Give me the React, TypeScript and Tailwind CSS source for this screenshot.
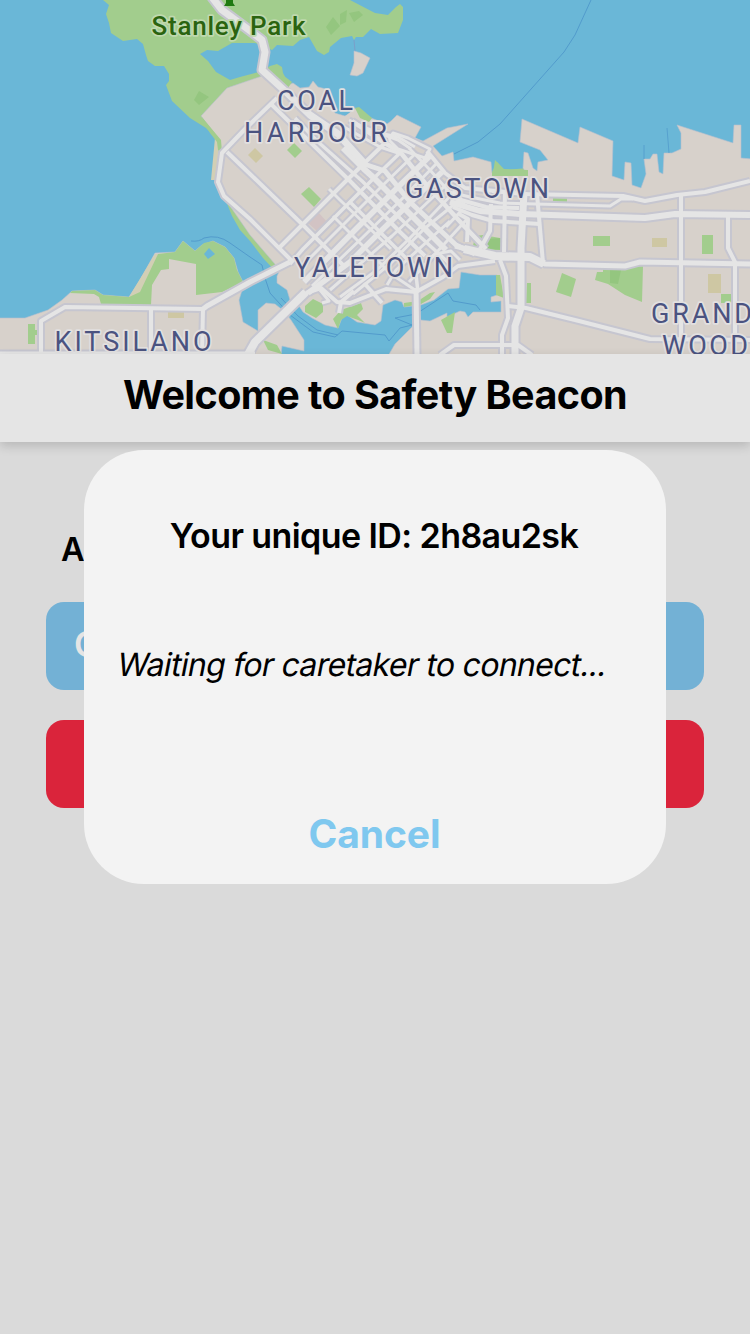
import React from "react";

type Road = { d: string; w: number };

const roads: Road[] = [
  // west end and peninsula edge
  { d: "M277 98L245 129L222 153L218 182L224 196L250 219L293 262", w: 4 },
  { d: "M227 152L250 174L302 224L345 267", w: 4 },
  { d: "M272 105L310 142L350 181L400 232L425 256", w: 4 },
  { d: "M280 247L347 180L384 144", w: 4 },
  { d: "M290 264L303 249L373 179L402 151", w: 3.5 },
  { d: "M302 266L341 227L381 187L414 155", w: 3 },
  { d: "M304 282L355 230L397 188L430 156", w: 5.5 },
  { d: "M312 286L362 238L405 196L437 163", w: 3 },
  { d: "M308 293L350 262L384 228L442 172", w: 5.5 },
  { d: "M330 290L392 236L449 182", w: 3 },
  { d: "M340 297L377 270L410 238L456 190", w: 3 },
  { d: "M353 294L390 264L424 229L462 198", w: 3 },
  { d: "M387 285L396 270L431 238L450 221", w: 3 },
  { d: "M409 282L436 253L468 218", w: 3 },
  // streets running south-east
  { d: "M295 118L317 141L362 181L404 222L450 264", w: 3.5 },
  { d: "M343 148L364 169L374 178L406 210L446 250", w: 6 },
  { d: "M338 134L364 164L385 171L411 203L456 245L475 254", w: 5 },
  { d: "M352 121L374 136L401 153L425 183L464 226L486 249", w: 4.5 },
  { d: "M344 127L380 147L398 153", w: 3 },
  { d: "M349 120L363 127L398 140L411 149", w: 3 },
  { d: "M375 132L398 137L415 147", w: 3 },
  { d: "M389 140L393 133L408 138L430 149L425 158L398 149L389 140", w: 3 },
  { d: "M409 148L430 170L451 194L466 206", w: 3 },
  { d: "M427 151L445 173L465 188L506 192", w: 4 },
  { d: "M333 216L363 246L391 274L415 290", w: 3 },
  { d: "M349 201L381 233L415 267L418 292", w: 3.5 },
  { d: "M329 189L340 200L391 249", w: 3 },
  { d: "M320 290L329 301L322 303", w: 3 },
  { d: "M364 283L382 303", w: 4 },
  { d: "M354 291L341 302L339 313", w: 4 },
  // waterfront drive
  { d: "M306 293L321 288L337 302L350 303L386 289L416 292L443 277L458 266L495 261", w: 4 },
  { d: "M426 262L435 254L451 251L460 260", w: 3 },
  // gastown
  { d: "M450 197L486 207L519 208", w: 4 },
  { d: "M453 207L472 215L493 221L540 224", w: 4 },
  { d: "M459 214L468 219L467 242", w: 4 },
  { d: "M491 204L490 231L480 249", w: 4 },
  { d: "M445 191L470 197L500 203L610 206L621 199L633 199", w: 3 },
  { d: "M446 227L461 211", w: 3 },
  // east side
  { d: "M492 191L525 194L623 196L645 201L677 195L705 192L750 181", w: 4 },
  { d: "M450 202L480 211L520 214L645 218L675 214L750 215", w: 6 },
  { d: "M455 246L500 258L530 258L545 264L625 266L640 262L750 264", w: 5 },
  { d: "M464 249L495 256L530 257L544 264", w: 8 },
  { d: "M505 191L504 252", w: 4 },
  { d: "M524 192L521 248L521 308L515 326L515 354", w: 7 },
  { d: "M537 194L543 263", w: 4 },
  { d: "M681 195L681 340", w: 4 },
  { d: "M728 216L728 248L735 262L735 340", w: 4 },
  { d: "M508 306L526 308L575 320L650 339L750 340", w: 4 },
  { d: "M500 260L506 276L508 318L502 335L502 354", w: 4 },
  { d: "M440 355L454 345L518 345L532 355", w: 4 },
  // bridges
  { d: "M290 262L250 282L207 306L203 309", w: 5 },
  { d: "M246 358L255 342L306 292", w: 8 },
  { d: "M416 288L417 355", w: 5 },
  // kitsilano
  { d: "M41 354L41 321L65 307L203 309L202 354", w: 4 },
  { d: "M151 309L151 354", w: 4 },
  { d: "M0 353L255 353", w: 3 },
  // causeway
  { d: "M211 -4L222 10L249 30L262 40L265 52L262 70L285 91L310 115L338 134L364 163", w: 7 },
];

const Label = ({ x, y, w, children }: { x: number; y: number; w: number; children: string }) => (
  <text
    x={x}
    y={y}
    textLength={w}
    fontSize="27"
    fontFamily="Roboto, sans-serif"
    fill="#4b5380"
    stroke="#e2e0e0"
    strokeWidth="3.5"
    strokeLinejoin="round"
    paintOrder="stroke"
  >
    {children}
  </text>
);

const CityMap = () => (
  <svg viewBox="0 0 750 354" className="block h-[354px] w-full shrink-0 overflow-hidden bg-[#6ab7d7]">
    {/* parks along the shore */}
    <g fill="#a2cd8d">
      <path d="M103 0L109 5L106 14L109 23L111 33L123 41L137 39L143 44L146 55L148 61L155 66L164 66L169 74L169 81L166 85L172 101L190 118L206 128L214 137L222 155L230 130L262 78L276 83L290 86L283 73L282 67L277 64L270 66L262 71L240 77L230 80L216 72L208 61L200 54L207 50L218 51L232 43L255 43L272 50L277 45L293 46L300 40L309 37L317 51L324 55L329 52L330 47L341 38L352 36L354 40L356 37L363 37L371 29L380 34L398 33L403 20L403 7L400 4L396 7L388 15L375 13L350 0Z" />
      <path d="M214 178L222 191L232 216L240 230L250 241L263 258L277 273L282 266L250 225L225 192Z" />
      <path d="M495 160L498 163L504 170L528 168L534 180L492 180Z" />
    </g>
    <path d="M354 40L355 51" stroke="#7a9fc9" strokeWidth="1" />
    {/* land */}
    <g fill="#d7d1cb" stroke="#b9bfce" strokeWidth="0.6">
      <path d="M201 116L227 88L262 76L285 86L293 83L300 88L309 87L313 81L318 87L326 89L332 103L335 113L345 116L355 108L371 118L387 124L391 121L397 115L421 127L415 138L423 141L447 128L468 124L433 146L442 156L453 152L454 161L473 157L491 162L492 173L526 173L523 168L524 152L528 153L533 168L537 171L538 162L548 160L540 150L520 142L522 119L578 143L580 127L613 141L612 176L624 180L625 162L631 163L632 185L641 188L646 174L644 159L650 159L653 154L657 154L659 172L663 174L664 153L672 153L681 149L681 133L677 125L733 143L734 125L741 125L741 158L752 159L752 356L388 356L395 344L413 326L421 320L430 321L447 313L447 317L460 311L465 312L468 317L473 312L501 312L501 301L491 302L491 297L497 295L497 275L480 275L461 272L459 288L448 289L434 300L421 305L404 307L402 302L395 300L383 305L381 321L375 325L357 322L344 313L338 328L325 325L312 318L303 312L297 303L290 300L287 290L277 283L277 276L280 270L250 235L230 206L215 180L221 152L218 138Z" />
      <path d="M-2 318L25 318L48 310L62 300L72 291L95 290L103 295L129 297L140 280L155 253L175 252L183 241L195 251L202 245L213 241L225 247L234 258L238 272L244 284L239 300L243 322L258 331L258 310L266 303L275 304L285 312L291 320L304 340L304 351L282 346L281 356L-2 356Z" />
      <path d="M354 51L361 53L370 58L363 73L357 76L350 75L354 63Z" />
    </g>
    <path d="M333 108L337 113L346 115L353 110L350 103Z" fill="#6ab7d7" />
    <g fill="#d2cfb5">
      <path d="M215 138L219 142L218 180L211 180Z" />
      <path d="M155 254L158 254L145 290L137 297L129 297Z" />
    </g>
    {/* neighbourhood parks */}
    <g fill="#a2cd8d">
      <path d="M201 116L221 140L222 152L218 150L217 142L210 133Z" />
      <path d="M276 70L292 82L288 88L278 82Z" />
      <path d="M355 108L359 107L372 118L369 122L360 118Z" />
      <path d="M158 254L175 252L183 241L195 251L204 243L213 241L225 247L234 258L237 270L243 282L222 292L196 295L196 264L169 259L169 269L161 270L152 285L151 305L101 304L99 297L94 294L70 293L72 291L95 290L103 295L129 297L140 292Z" />
      <path d="M294 143L302 151L295 158L287 150Z" />
      <path d="M309 187L321 199L314 207L301 194Z" />
      <path d="M305 306L313 299L323 304L323 312L316 318L305 312Z" />
      <path d="M333 319L341 310L361 303L363 309L357 315L365 323L358 320L347 316L341 320L338 329Z" />
      <path d="M404 303L418 301L430 293L435 292L430 299L421 304L404 307Z" />
      <path d="M441 320L455 312L452 333L447 333Z" />
      <path d="M263 340L277 345L282 354L268 350Z" />
      <path d="M28 324H35V330H38V335H35V344H28Z" />
      <path d="M475 236L483 235L500 238V250H482L473 246Z" />
      <path d="M496 275L500 275L504 298L496 295Z" />
      <path d="M527 283H531V303H526Z" />
      <path d="M562 273L576 279L571 297L556 292Z" />
      <path d="M593 236H610V246H593Z" />
      <path d="M553 198H567V202H553Z" />
      <path d="M597 272L603 272V269L643 266L642 302L625 295L608 284L595 280Z" />
      <path d="M702 235H713V254H702Z" />
      <path d="M721 294H731V303H721Z" />
      <path d="M492 172L497 162L504 169L528 170L528 176L492 176Z" />
    </g>
    <g fill="#94c67f">
      <path d="M485 239L502 238V250L484 248Z" />
      <path d="M610 270H621L618 284L610 283Z" />
      <path d="M199 91L209 97L199 105L194 100Z" />
      <path d="M326 27L333 17L340 26L331 35ZM340 14L347 10L346 22L340 25ZM349 13L359 11L363 15L354 22Z" />
    </g>
    <g fill="#cec7a3">
      <path d="M255 148L263 156L256 163L248 155Z" />
      <path d="M652 238H667V247H652ZM708 274H721V293H708ZM168 312H184V318H168Z" />
    </g>
    <path d="M318 212L328 223L318 232L308 223Z" fill="#d2c3c4" />
    <path d="M209 248L215 254L208 259L204 254Z" fill="#6ab7d7" />
    {/* ferry and boat lines */}
    <g fill="none" stroke="#529bcc" strokeWidth="1">
      <path d="M591 0L575 35L564 52L500 124L478 142L454 154" />
      <path d="M191 241Q199 242 204 238Q218 234 230 243L250 257L262 265L265 278L270 293L290 315L313 332L335 337L342 331L385 335L389 341L400 328L412 325L395 318L416 314L448 293L453 301L476 305L480 310" />
      <path d="M281 298L298 316L317 330L338 335" />
      <path d="M644 145L644 159M667 128L669 153" strokeWidth="0.8" />
    </g>
    {/* roads: casing, then surface */}
    <g fill="none" stroke="#c6c6d0" strokeLinejoin="round">
      {roads.map((r) => (
        <path key={r.d} d={r.d} strokeWidth={r.w + 4} />
      ))}
    </g>
    <g fill="none" stroke="#e5e5e5" strokeLinejoin="round">
      {roads.map((r) => (
        <path key={r.d} d={r.d} strokeWidth={r.w} />
      ))}
    </g>
    <path d="M226 0H233V3L235 6H224L226 3Z" fill="#1f7a12" />
    <text
      x="151.500"
      y="35"
      textLength="154"
      fontSize="26"
      fontWeight="500"
      fontFamily="Roboto, sans-serif"
      fill="#2a6410"
      stroke="#bfd9ae"
      strokeWidth="3.500"
      strokeLinejoin="round"
      paintOrder="stroke"
    >
      Stanley Park
    </text>
    <Label x={277} y={110} w={76}>COAL</Label>
    <Label x={244} y={141.5} w={143}>HARBOUR</Label>
    <Label x={405} y={198} w={144}>GASTOWN</Label>
    <Label x={294} y={277} w={159}>YALETOWN</Label>
    <Label x={54.5} y={351} w={157}>KITSILANO</Label>
    <Label x={651} y={323} w={101}>GRAND</Label>
    <Label x={662} y={354.5} w={86}>WOOD</Label>
  </svg>
);

export default function App() {
  return (
    <div className="relative flex h-[1334px] w-[750px] flex-col overflow-hidden bg-[#dadada] font-['Inter',sans-serif] text-black">
      <CityMap />
      <header className="flex h-[88px] shrink-0 items-center justify-center bg-[#e5e5e5] pb-[7px] shadow-[0_4px_10px_rgba(0,0,0,0.16)]">
        <h1 className="whitespace-nowrap text-[39.500px] font-bold leading-[48px] tracking-[-0.58px]">Welcome to Safety Beacon</h1>
      </header>
      <main className="flex flex-col px-[46px] pt-[88px]">
        <p className="h-[72px] pl-[15px] text-[32.500px] font-semibold leading-[40px]">A</p>
        <div className="flex h-[88px] items-center rounded-[18px] bg-[#73b1d5] pb-[4px] pl-[28px] text-[35px] font-semibold text-[#e5e5e5]">C</div>
        <div className="mt-[30px] h-[88px] rounded-[18px] bg-[#da243b]" />
      </main>
      <section
        role="dialog"
        className="absolute left-[84px] top-[450px] flex h-[434px] w-[582px] flex-col items-center rounded-[60px] bg-[#f3f3f3] pt-[65px]"
      >
        <h2 className="-ml-[2px] whitespace-nowrap text-[34px] font-semibold leading-[42px] tracking-[-0.58px]">Your unique ID: 2h8au2sk</h2>
        <p className="ml-[34px] mt-[87px] origin-center -skew-x-[11deg] self-start whitespace-nowrap text-[32px] leading-[42px] tracking-[-0.7px]">
          Waiting for caretaker to connect...
        </p>
        <button className="-ml-[1px] mt-[124px] text-[39px] font-bold leading-[48px] tracking-[-0.1px] text-[#7fc8ef]">Cancel</button>
      </section>
    </div>
  );
}
